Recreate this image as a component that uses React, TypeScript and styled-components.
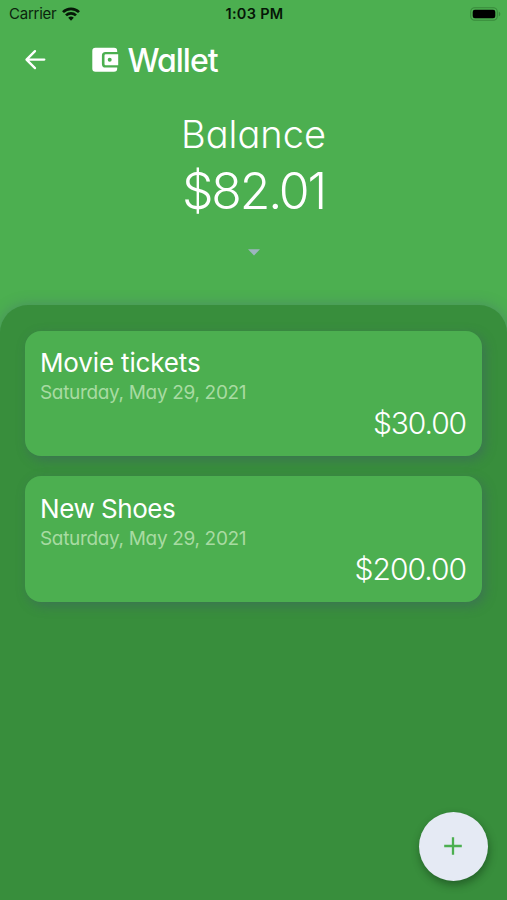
import React from "react";
import styled, { createGlobalStyle } from "styled-components";

const GlobalStyle = createGlobalStyle`
  * { box-sizing: border-box; }
  html, body { margin: 0; padding: 0; background: #388e3c; }
  body { font-family: "Inter", "Lato", sans-serif; font-feature-settings: "cv11" 1; }
`;

const Screen = styled.main`
  position: relative;
  display: flex;
  flex-direction: column;
  width: 507px;
  height: 900px;
  overflow: hidden;
  background: #4caf50;
  color: #fff;
`;

const StatusBar = styled.div`
  display: grid;
  grid-template-columns: 1fr auto 1fr;
  align-items: center;
  height: 27px;
  padding: 0 6px 0 9px;
  color: #0b240d;
  font-size: 15px;
  font-feature-settings: normal;
`;

const Carrier = styled.div`
  display: flex;
  align-items: center;
  gap: 6px;
  letter-spacing: -0.25px;
`;

const Clock = styled.div`
  margin-right: 1px;
  font-size: 14.5px;
  font-weight: 600;
  letter-spacing: 0.3px;
  color: #051607;
`;

const Battery = styled.div`
  display: flex;
  justify-content: flex-end;
`;

const Header = styled.header`
  display: flex;
  align-items: center;
  height: 66px;
  padding-left: 24px;
`;

const BackButton = styled.button`
  display: flex;
  width: 24px;
  height: 24px;
  margin-right: 43.5px;
  padding: 0;
  border: 0;
  background: none;
  color: inherit;
`;

const Title = styled.h1`
  margin: 2px 0 0 8px;
  font-size: 32px;
  line-height: 40px;
  font-weight: 500;
  letter-spacing: -1px;
`;

const Summary = styled.section`
  display: flex;
  flex-direction: column;
  align-items: center;
  height: 212px;
  padding-top: 16px;
  font-weight: 300;
`;

const BalanceLabel = styled.div`
  font-size: 38px;
  line-height: 50px;
`;

const BalanceValue = styled.div`
  font-size: 50px;
  line-height: 64px;
  letter-spacing: -2.2px;
`;

const Expand = styled.div`
  display: flex;
  margin-top: 26px;
`;

const Panel = styled.section`
  display: flex;
  flex: 1;
  flex-direction: column;
  gap: 20px;
  padding: 25.5px 25px 0;
  border-radius: 28px 28px 0 0;
  background: #388e3c;
  box-shadow: 0 0 14px rgba(70, 85, 125, 0.38);
`;

const Card = styled.article`
  display: flex;
  flex-direction: column;
  height: 125.5px;
  padding: 15.5px 16px 0 15px;
  border-radius: 16px;
  background: #4caf50;
  box-shadow: 3px 4px 12px rgba(65, 80, 115, 0.4);
`;

const CardTitle = styled.h2<{ $tracking: number }>`
  margin: 0;
  font-size: 26px;
  line-height: 34px;
  font-weight: 400;
  letter-spacing: ${(p) => p.$tracking}px;
`;

const CardDate = styled.time`
  font-size: 19px;
  line-height: 25px;
  font-weight: 400;
  color: #a8dba2;
  letter-spacing: -0.33px;
`;

const CardAmount = styled.div<{ $tracking: number }>`
  align-self: flex-end;
  margin-top: -1px;
  font-size: 30px;
  line-height: 38px;
  font-weight: 300;
  letter-spacing: ${(p) => p.$tracking}px;
`;

const AddButton = styled.button`
  position: absolute;
  right: 19.5px;
  bottom: 19.5px;
  display: flex;
  align-items: center;
  justify-content: center;
  width: 69px;
  height: 69px;
  padding: 0;
  border: 0;
  border-radius: 50%;
  background: #e5eaf4;
  color: #4caf50;
  box-shadow: 1px 4px 9px rgba(10, 40, 15, 0.45);
`;

const entries = [
  { title: "Movie tickets", date: "Saturday, May 29, 2021", amount: "$30.00", titleTracking: -0.15, amountTracking: -1.1 },
  { title: "New Shoes", date: "Saturday, May 29, 2021", amount: "$200.00", titleTracking: -0.45, amountTracking: -1 },
];

const WifiIcon = () => (
  <svg width="18" height="14" viewBox="0 0 18 14" fill="none" stroke="#061807" strokeWidth="2.7">
    <path d="M1 5.1a11.4 11.4 0 0 1 16 0" />
    <path d="M4 8.4a7.1 7.1 0 0 1 10 0" />
    <path d="M9 13.7 6.2 10.8a4 4 0 0 1 5.6 0Z" fill="#061807" stroke="none" />
  </svg>
);

const BatteryIcon = () => (
  <svg width="31" height="14" viewBox="0 0 31 14">
    <rect x="0.7" y="0.7" width="26.6" height="12.6" rx="4" fill="none" stroke="#388a3b" strokeWidth="1.1" />
    <rect x="2.7" y="2.7" width="22.6" height="8.6" rx="2.2" fill="#000" />
    <path d="M28.8 4.7c2 .7 2 3.9 0 4.6Z" fill="#388a3b" />
  </svg>
);

const BackIcon = () => (
  <svg width="24" height="24" viewBox="0 0 24 24" fill="none" stroke="currentColor" strokeWidth="2.3" strokeLinecap="round" strokeLinejoin="round">
    <path d="M20.3 11.6H2.7M11 3.1 2.5 11.6l8.500 8.500" />
  </svg>
);

const WalletIcon = () => (
  <svg width="28" height="26" viewBox="0 0 28 26">
    <path
      fill="#fff"
      fillRule="evenodd"
      d="M3.500 .8h18.500a3.200 3.200 0 0 1 3.200 3.200v1.100H13.500a3.600 3.600 0 0 0-3.600 3.600v8.200a3.600 3.600 0 0 0 3.600 3.600h11.700v1.100a3.200 3.200 0 0 1-3.200 3.200H3.500A3.200 3.200 0 0 1 .3 21.600V4A3.200 3.200 0 0 1 3.500 .8ZM13.700 7.300h12.500v11H13.700a1.200 1.200 0 0 1-1.200-1.200V8.500a1.200 1.200 0 0 1 1.200-1.200Zm4 3.500a2 2 0 1 0 0 4 2 2 0 1 0 0-4Z"
    />
  </svg>
);

export default function App() {
  return (
    <>
      <GlobalStyle />
      <Screen>
        <StatusBar>
          <Carrier>
            Carrier
            <WifiIcon />
          </Carrier>
          <Clock>1:03 PM</Clock>
          <Battery>
            <BatteryIcon />
          </Battery>
        </StatusBar>
        <Header>
          <BackButton aria-label="Back">
            <BackIcon />
          </BackButton>
          <WalletIcon />
          <Title>Wallet</Title>
        </Header>
        <Summary>
          <BalanceLabel>Balance</BalanceLabel>
          <BalanceValue>$82.01</BalanceValue>
          <Expand>
            <svg width="12" height="7" viewBox="0 0 12 7">
              <path d="M0 .2h12L6 6.6Z" fill="#9db5bf" />
            </svg>
          </Expand>
        </Summary>
        <Panel>
          {entries.map((e) => (
            <Card key={e.title}>
              <CardTitle $tracking={e.titleTracking}>{e.title}</CardTitle>
              <CardDate>{e.date}</CardDate>
              <CardAmount $tracking={e.amountTracking}>{e.amount}</CardAmount>
            </Card>
          ))}
        </Panel>
        <AddButton aria-label="Add">
          <svg width="20" height="20" viewBox="0 0 20 20" stroke="currentColor" strokeWidth="2.3">
            <path d="M10 1.2v17.6M1.2 10h17.6" />
          </svg>
        </AddButton>
      </Screen>
    </>
  );
}
